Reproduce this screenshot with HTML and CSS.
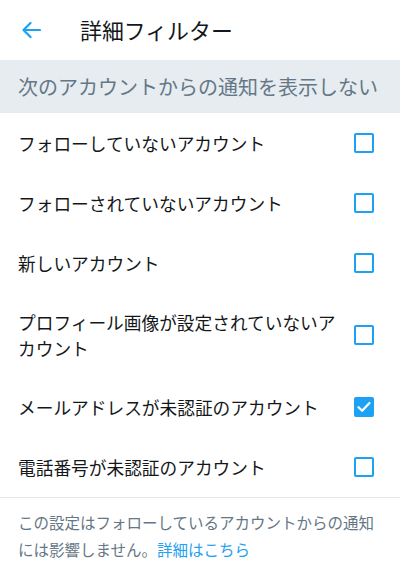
FILE: index.html
```html
<!DOCTYPE html>
<html lang="ja">
<head>
<meta charset="utf-8">
<link rel="stylesheet" href="styles.css">
</head>
<body>
<div class="page">
  <header class="topbar">
    <svg class="back" width="20" height="18" viewBox="0 0 20 18"><path d="M19 9H2.5M9.5 2L2.5 9l7 7" fill="none" stroke="#1da1f2" stroke-width="2.2" stroke-linecap="round" stroke-linejoin="round"/></svg>
    <h1 class="title">詳細フィルター</h1>
  </header>
  <div class="section">次のアカウントからの通知を表示しない</div>
  <ul class="list">
    <li class="row"><span class="label">フォローしていないアカウント</span><span class="box"></span></li>
    <li class="row"><span class="label">フォローされていないアカウント</span><span class="box"></span></li>
    <li class="row"><span class="label">新しいアカウント</span><span class="box"></span></li>
    <li class="row tall"><span class="label">プロフィール画像が設定されていないアカウント</span><span class="box"></span></li>
    <li class="row"><span class="label">メールアドレスが未認証のアカウント</span><span class="box checked"><svg width="14" height="12" viewBox="0 0 14 12"><path d="M1.5 6.2l3.6 3.6L12.5 2" fill="none" stroke="#fff" stroke-width="2.2" stroke-linecap="round" stroke-linejoin="round"/></svg></span></li>
    <li class="row"><span class="label">電話番号が未認証のアカウント</span><span class="box"></span></li>
  </ul>
  <div class="note">
    <span class="line">この設定はフォローしているアカウントからの通知</span>
    <span class="line"><span>には影響しません。</span><a class="link" href="#">詳細はこちら</a></span>
  </div>
</div>
</body>
</html>
```

FILE: styles.css
```css
* { box-sizing: border-box; }
html, body { margin: 0; padding: 0; background: #fff; }
body {
  font-family: "Noto Sans CJK JP", "Noto Sans", sans-serif;
  color: #14171a;
}
.page { width: 400px; }
.topbar {
  height: 60px;
  display: flex;
  align-items: center;
  padding-left: 21px;
}
.back { display: block; flex: none; }
.title {
  margin: 0 0 0 39px;
  font-size: 21.9px;
  font-weight: 400;
  line-height: 1;
}
.section {
  height: 53px;
  background: #e6ecf0;
  color: #657786;
  font-size: 20px;
  display: flex;
  align-items: center;
  padding-left: 18px;
}
.list { list-style: none; margin: 0; padding: 0; border-bottom: 1px solid #e1e8ed; }
.row {
  height: 60px;
  display: flex;
  align-items: center;
  padding: 0 26px 0 18px;
  font-size: 17.7px;
  line-height: 26px;
}
.row.tall { height: 84px; }
.label { flex: 1; min-width: 0; padding-right: 12px; }
.box {
  flex: none;
  width: 20px;
  height: 20px;
  border: 2.2px solid #1da1f2;
  border-radius: 2px;
  display: flex;
  align-items: center;
  justify-content: center;
}
.box.checked { background: #1da1f2; }
.box svg { display: block; }
.note {
  padding: 11px 18px 0 18px;
  font-size: 15.5px;
  line-height: 27px;
  color: #657786;
}
.line { display: block; white-space: nowrap; }
.link { color: #1da1f2; text-decoration: none; }
```
